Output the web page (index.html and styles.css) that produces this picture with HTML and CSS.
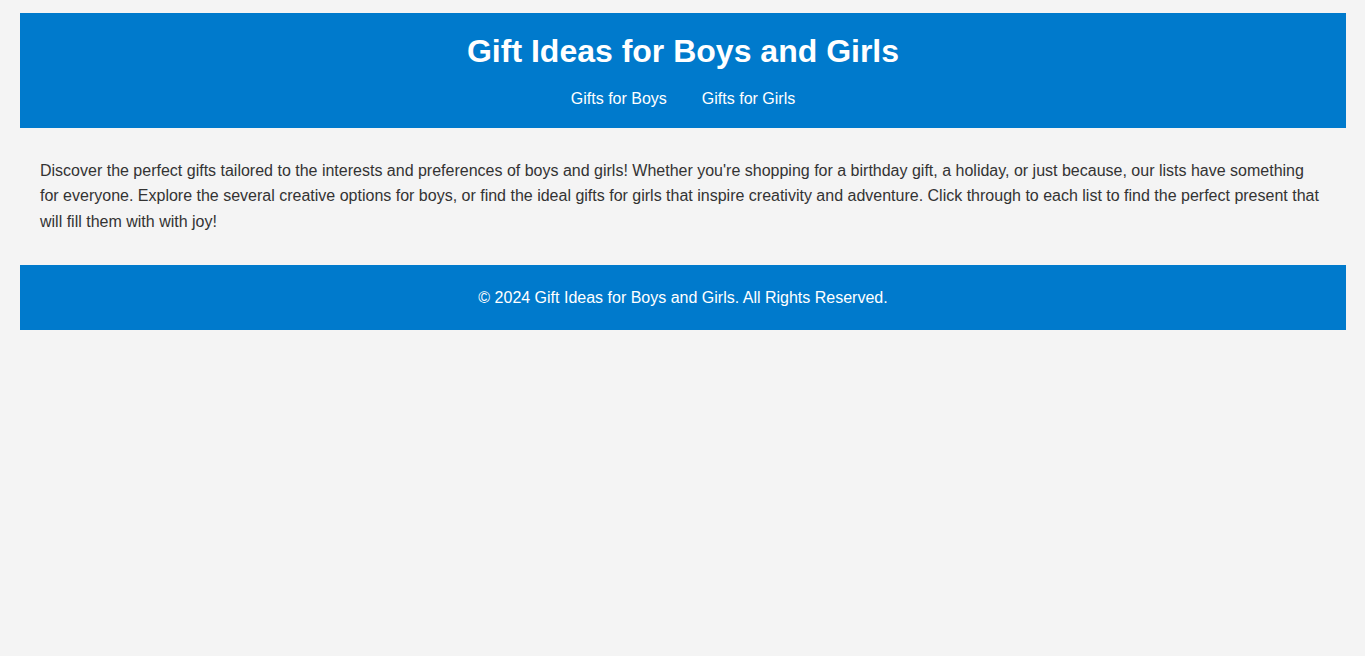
FILE: index.html
```html
<!DOCTYPE html>
<html lang="en">
<head>
<meta charset="utf-8">
<title>Gift Ideas for Boys and Girls</title>
<link rel="stylesheet" href="styles.css">
</head>
<body>
<div class="page">
  <header class="site-header">
    <h1 class="title">Gift Ideas for Boys and Girls</h1>
    <nav class="nav">
      <a href="#" class="nav-link">Gifts for Boys</a>
      <a href="#" class="nav-link">Gifts for Girls</a>
    </nav>
  </header>
  <main class="content">
    <p class="intro">Discover the perfect gifts tailored to the interests and preferences of boys and girls! Whether you're shopping for a birthday gift, a holiday, or just because, our lists have something for everyone. Explore the several creative options for boys, or find the ideal gifts for girls that inspire creativity and adventure. Click through to each list to find the perfect present that will fill them with with joy!</p>
  </main>
  <footer class="site-footer">
    <p class="copy">&copy; 2024 Gift Ideas for Boys and Girls. All Rights Reserved.</p>
  </footer>
</div>
</body>
</html>
```

FILE: styles.css
```css
html, body {
  margin: 0;
  padding: 0;
}
body {
  background: #f4f4f4;
  font-family: "Liberation Sans", Arial, sans-serif;
  font-size: 16px;
  line-height: 1.6;
  color: #333;
}
.page {
  padding: 13px 19px 0 20px;
}
.site-header {
  background: #007acc;
  color: #fff;
  text-align: center;
  padding: 13px 0 16px;
}
.title {
  margin: 0 0 9px;
  font-size: 32px;
  font-weight: bold;
  line-height: 1.6;
}
.nav {
  display: flex;
  justify-content: center;
  gap: 35px;
}
.nav-link {
  color: #fff;
  text-decoration: none;
}
.content {
  padding: 20px;
}
.intro {
  margin: 10px 0;
}
.site-footer {
  background: #007acc;
  color: #fff;
  text-align: center;
  padding: 20px;
}
.copy {
  margin: 0;
}
```
